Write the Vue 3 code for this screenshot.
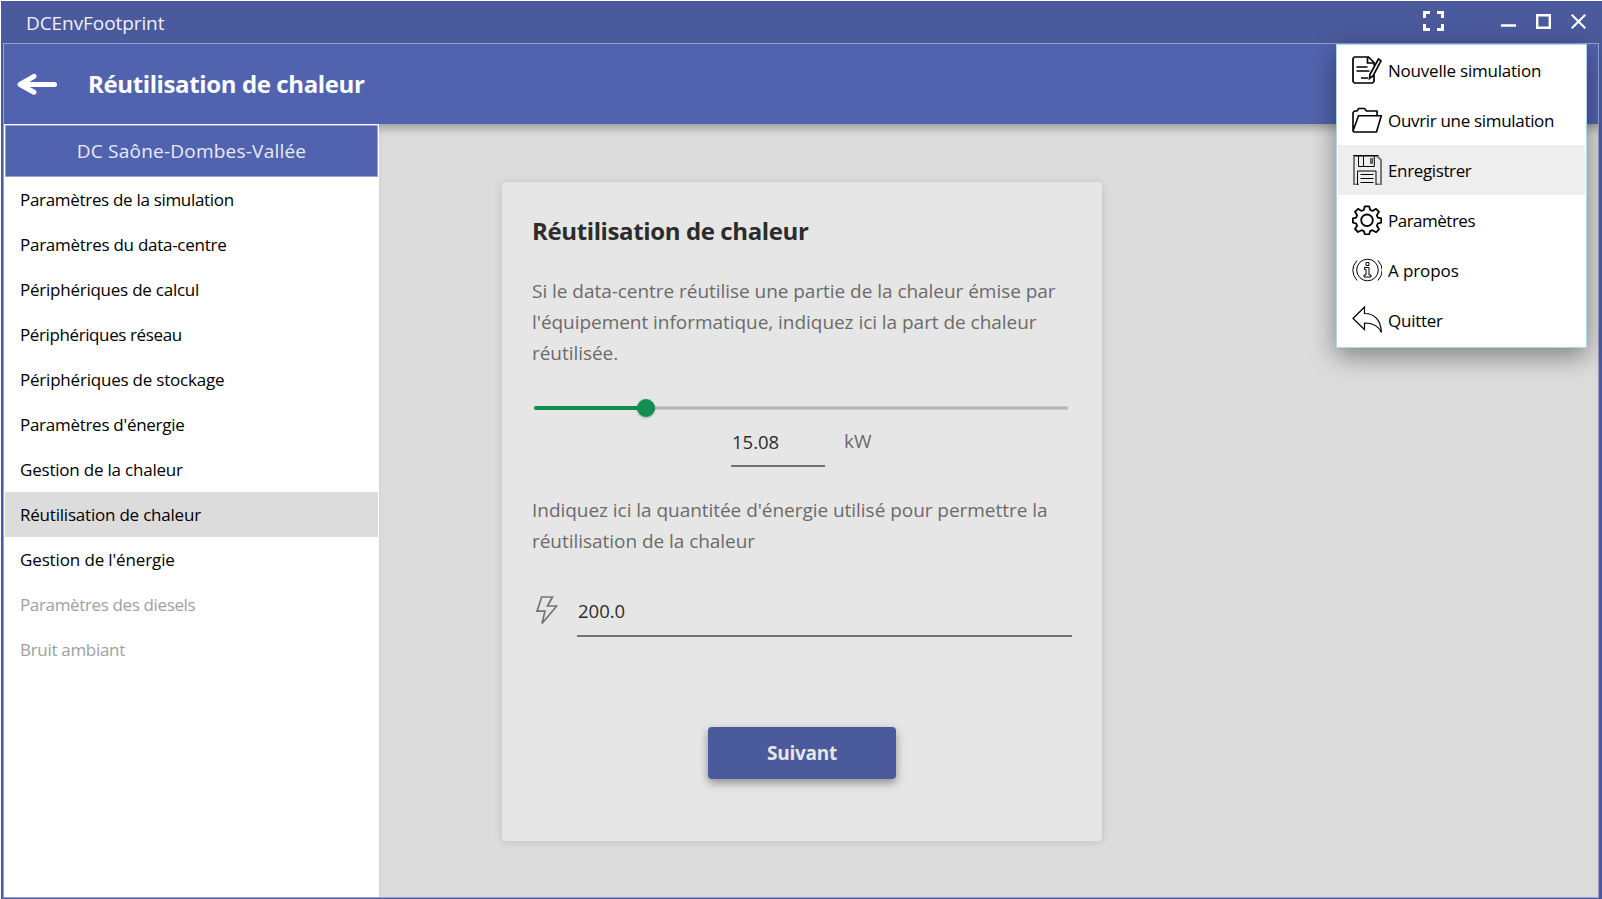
<script setup>
// ls: letter-spacing in px, tuned per label
const steps = [
  { label: 'Paramètres de la simulation', ls: -0.31 },
  { label: 'Paramètres du data-centre', ls: -0.27 },
  { label: 'Périphériques de calcul', ls: -0.24 },
  { label: 'Périphériques réseau', ls: -0.39 },
  { label: 'Périphériques de stockage', ls: -0.21 },
  { label: "Paramètres d'énergie", ls: -0.28 },
  { label: 'Gestion de la chaleur', ls: -0.21 },
  { label: 'Réutilisation de chaleur', ls: -0.21, active: true },
  { label: "Gestion de l'énergie", ls: -0.13 },
  { label: 'Paramètres des diesels', ls: -0.36, disabled: true },
  { label: 'Bruit ambiant', ls: -0.31, disabled: true },
]
const menu = [
  { label: 'Nouvelle simulation', icon: 'new', ls: -0.22 },
  { label: 'Ouvrir une simulation', icon: 'open', ls: -0.32 },
  { label: 'Enregistrer', icon: 'save', ls: -0.37, active: true },
  { label: 'Paramètres', icon: 'gear', ls: -0.5 },
  { label: 'A propos', icon: 'info', ls: -0.1 },
  { label: 'Quitter', icon: 'quit', ls: -0.25 },
]
</script>

<template>
  <div class="window">
    <header class="titlebar">
      <span class="app-name">DCEnvFootprint</span>
      <svg class="full" width="21" height="20" viewBox="0 0 21 20"><path d="M1.500 7V1.500H7M14 1.500h5.500V7M19.500 13v5.500H14M7 18.500H1.500V13" /></svg>
      <svg class="min" width="15" height="16" viewBox="0 0 15 16"><path d="M0 12.500h15" /></svg>
      <svg class="max" width="15" height="15" viewBox="0 0 15 15"><path d="M1.200 1.200h12.600v12.600H1.200z" /></svg>
      <svg class="close" width="15" height="15" viewBox="0 0 15 15"><path d="M.7.7l13.600 13.600M14.300.7L.7 14.300" /></svg>
    </header>
    <div class="frame">
      <div class="toolbar">
        <svg class="back" width="40" height="22" viewBox="0 0 40 22"><path d="M37.500 11.500H4M17 3.300L3 11.500l14 7.700" /></svg>
        <h1>Réutilisation de chaleur</h1>
      </div>
      <div class="body">
        <nav class="sidebar">
          <div class="dc">DC Saône-Dombes-Vallée</div>
          <div v-for="s in steps" :key="s.label" class="step" :class="{ active: s.active, disabled: s.disabled }" :style="{ letterSpacing: s.ls + 'px' }">{{ s.label }}</div>
        </nav>
        <main class="main">
          <section class="card">
            <h2>Réutilisation de chaleur</h2>
            <p class="first">Si le data-centre réutilise une partie de la chaleur émise par<br />l'équipement informatique, indiquez ici la part de chaleur<br />réutilisée.</p>
            <div class="slider"><div class="fill"></div><div class="thumb"></div></div>
            <div class="amount"><div class="field small">15.08</div><span class="unit">kW</span></div>
            <p class="second">Indiquez ici la quantitée d'énergie utilisé pour permettre la<br />réutilisation de la chaleur</p>
            <div class="energy">
              <svg width="22" height="30" viewBox="0 0 22 30"><path d="M5.700 1H16.500L11.500 10H20.700L6 27.500L9 15.200H1z" /></svg>
              <div class="field">200.0</div>
            </div>
            <button class="next">Suivant</button>
          </section>
        </main>
      </div>
    </div>
    <div class="menu">
      <div v-for="i in menu" :key="i.label" class="item" :class="{ active: i.active }">
        <svg width="30" height="30" viewBox="0 0 30 30">
          <g v-if="i.icon === 'new'" stroke-width="1.700"><path d="M22 10.500V7.500L16.500 2H2.500L1 3.500v23L2.500 28h18L22 26.500V20M15.500 2v6H22" /><path d="M4.500 12h11M4.500 16h13M9 23h7" /><path d="M26.500 4l2.500 1.800L21 21l-3.500 2.500.5-4.200z" /></g>
          <g v-else-if="i.icon === 'open'" stroke-width="1.600"><path d="M1 26V7.500L2.500 6H5l1.500-2.500h6L14.500 6H25v4.500M1 26L6.500 10.800H29.300L24.500 27H2z" /></g>
          <g v-else-if="i.icon === 'save'" stroke-width="1"><path class="grey" d="M2 30V1h23l4 4v25M.9 29.500H7M24 29.500h5.900" /><path d="M1.500.5h25M6.500.5v11h15.800V.5M11.500.5v11M5.500 30V16h18.500v14M8.500 19.500h13M8.500 23.500h13M8.500 27.500h13" /><path class="solid" d="M18.500 3.500h2v5h-2z" /></g>
          <g v-else-if="i.icon === 'gear'" stroke-width="1.800"><circle cx="15" cy="15.300" r="5.800" /><path d="M12.800 1.300h4.400l1 3.700 2.300.9L24 3.800l3 3-2.100 3.500.9 2.300 3.400.8v4.200l-3.400.9-.9 2.300 2.100 3.500-3 3-3.500-2.100-2.300.9-1 3.200h-4.400l-1-3.200-2.300-.9L6 27l-3-3 2.100-3.200-.9-2.300-3.300-.9v-4.200l3.300-.8.9-2.300L3 6.800l3-3 3.500 2.100 2.300-.9z" stroke-linejoin="round" /></g>
          <g v-else-if="i.icon === 'info'" stroke-width="1"><circle cx="15.500" cy="15" r="10.800" /><path d="M5 5.500Q-3.500 15 5 25.500M26 5.500Q34.500 15 26 25.500M14 7.500h3v3h-3zM12.500 12.500H17v7.500h2v2h-7v-2h2v-5.500h-1.500z" /></g>
          <g v-else stroke-width="1.200"><path d="M1 13.500L12.500 2v6.500C22 8.500 29 14.500 29.400 27.500C26 19.500 19 18 12.500 18v6.500z" /></g>
        </svg>
        <span :style="{ letterSpacing: i.ls + 'px' }">{{ i.label }}</span>
      </div>
    </div>
  </div>
</template>

<style>
body { margin: 0; overflow: hidden; }
</style>
<style scoped>
* { box-sizing: border-box; }
.window { position: relative; width: 1602px; height: 899px; display: flex; flex-direction: column; border-top: 1px solid #fff; border-left: 1px solid #fff; background: #4a5a9c; padding: 0 3px 1px 2px; font-family: "Open Sans", "Noto Sans", sans-serif; }
svg { fill: none; stroke: #fff; flex: none; display: block; }
.titlebar { height: 42px; display: flex; align-items: center; padding: 0 13px 2px 0; }
.app-name { margin: 3px 0 0 23px; font-size: 19px; letter-spacing: -.08px; color: #eef0f8; }
.full { margin-left: auto; stroke-width: 3; }
.min { margin-left: 57px; stroke-width: 2.500; }
.max { margin-left: 20px; stroke-width: 2.400; }
.close { margin-left: 20px; stroke-width: 2.100; }
.frame { flex: 1; display: flex; flex-direction: column; border: 1px solid #98a2cc; min-height: 0; }
.toolbar { height: 80px; flex: none; background: #5163ae; display: flex; align-items: center; }
.back { margin-left: 12.500px; stroke-width: 5; stroke-linecap: round; stroke-linejoin: round; }
h1 { margin: -2px 0 0 31.500px; font-size: 24px; font-weight: 700; letter-spacing: -.38px; color: #fff; }
.body { flex: 1; display: flex; min-height: 0; }
.sidebar { width: 375px; background: #fff; padding: 1px; }
.dc { height: 52px; border: 1px solid #98a2cc; background: #5163ae; color: #e8ebf5; display: flex; align-items: center; justify-content: center; font-size: 19px; letter-spacing: .22px; }
.step { height: 45px; padding: 0 0 1px 15px; display: flex; align-items: center; font-size: 17px; color: #000; }
.step.active { background: #dcdcdc; }
.step.disabled { color: #a0a0a0; }
.main { flex: 1; background: #dcdcdc; box-shadow: inset 0 10px 10px -6px rgba(0,0,0,.3); padding: 58px 0 0 123px; }
.card { width: 600px; height: 659px; border-radius: 4px; background: #e6e6e6; box-shadow: 0 1px 10px rgba(0,0,0,.13); padding: 30px 30px 0; display: flex; flex-direction: column; }
h2 { margin: 0; font-size: 24px; line-height: 38px; letter-spacing: -.38px; color: #2c2c2c; }
p { margin: 0; font-size: 19px; line-height: 31px; letter-spacing: -.04px; color: #6b6b6b; white-space: nowrap; }
.first { margin-top: 26px; }
.slider { position: relative; width: 534px; height: 4px; margin: 37px 0 0 2px; background: #b6b6b6; border: 1px solid #c8c8c8; border-width: 1px 0; border-radius: 2px; }
.fill { position: absolute; left: 0; top: -1px; width: 112px; height: 4px; background: #128f50; border-radius: 2px; }
.thumb { position: absolute; left: 103px; top: -8px; width: 18px; height: 18px; border-radius: 50%; background: #128f50; box-shadow: 0 1px 3px rgba(0,0,0,.25); }
.amount { display: flex; margin: 10px 0 0 199px; height: 47px; }
.field { border-bottom: 2px solid #747474; flex: 1; font-size: 18.500px; color: #2c2c2c; padding-left: 1px; line-height: 44px; }
.small { flex: none; width: 94px; line-height: 43px; }
.unit { margin-left: 19px; font-size: 19px; line-height: 43px; color: #6b6b6b; }
.second { margin-top: 28px; }
.energy { display: flex; margin: 32px 0 0 4px; height: 48px; width: 536px; gap: 19px; }
.energy svg { stroke: #747474; stroke-width: 1.700; margin-top: 7px; }
.next { align-self: center; width: 188px; height: 52px; margin-top: 90px; border: 0; border-radius: 4px; background: #4b5a9c; color: #e6e6e6; font: 700 19px "Open Sans", sans-serif; letter-spacing: -.25px; box-shadow: 0 4px 10px rgba(0,0,0,.38); }
.menu { position: absolute; left: 1335px; top: 43px; width: 251px; height: 304px; z-index: 5; background: #fff; border: 1px solid #add8e6; padding: 0 1px; box-shadow: 0 8px 24px rgba(0,0,0,.42); }
.item { height: 50px; display: flex; align-items: center; padding-left: 14px; gap: 6px; font-size: 17px; color: #000; }
.item.active { background: #eee; }
.item svg { stroke: #000; }
.item .grey { stroke: #777; stroke-width: 2; }
.item .solid { fill: #777; stroke: #555; }
</style>
